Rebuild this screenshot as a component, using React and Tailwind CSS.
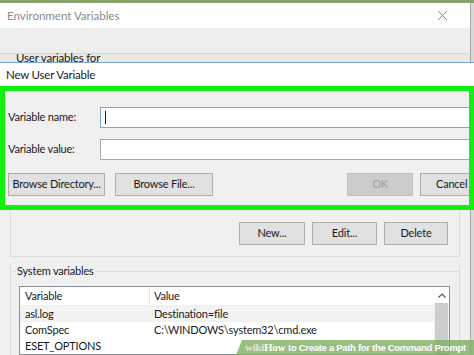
import React from "react";

function WinButton({ children, className = "", disabled = false }) {
  return (
    <div
      className={
        "flex h-[23px] items-center justify-center whitespace-nowrap border text-[11px] tracking-[-0.2px] " +
        (disabled
          ? "border-[#bfbfbf] bg-[#cccccc] text-[#a0a0a0] "
          : "border-[#adadad] bg-[#e1e1e1] text-[#1a1a1a] ") +
        className
      }
    >
      {children}
    </div>
  );
}

function SideStrip() {
  return <div className="w-[4px] shrink-0 border-l border-[#a8a8a8] bg-[#d9d9d9]" />;
}

export default function App() {
  const rows = [
    ["asl.log", "Destination=file", true],
    ["ComSpec", "C:\\WINDOWS\\system32\\cmd.exe", false],
    ["ESET_OPTIONS", "", false],
  ];

  return (
    <div
      className="relative flex h-[355px] w-[474px] flex-col overflow-hidden bg-[#f0f0f0] text-[#1a1a1a]"
      style={{ fontFamily: "Lato, 'Noto Sans', sans-serif" }}
    >
      {/* desktop strip behind the window */}
      <div className="h-[3px] shrink-0 bg-[#8aa36c]" />

      {/* Environment Variables window, top part */}
      <div className="flex shrink-0">
        <div className="flex w-[470px] flex-col">
          <div className="flex h-[25px] items-center justify-between bg-white pl-[7px] pr-[22px]">
            <span className="text-[11.5px] text-[#8a8a8a]">Environment Variables</span>
            <svg width="11" height="11" viewBox="0 0 11 11" className="text-[#8a8a8a]">
              <path d="M1 1L10 10M10 1L1 10" stroke="currentColor" strokeWidth="1" />
            </svg>
          </div>
          <div className="relative h-[34px] bg-[#eeeeee]">
            <div className="absolute left-0 right-0 top-[25px] h-[9px] border-t border-[#c9dcea] bg-[#ebe8e2]" />
            <span className="absolute left-[16px] top-[21px] text-[11.5px] tracking-[-0.2px] text-[#1a1a1a]">
              User variables for
            </span>
          </div>
        </div>
        <SideStrip />
      </div>

      {/* New User Variable dialog */}
      <div className="flex shrink-0 flex-col border-t border-[#7ea7cf]">
        <div className="flex h-[23px] items-center bg-white pl-[6px] text-[11.5px] tracking-[-0.2px] text-[#1a1a1a]">
          New User Variable
        </div>
        <div className="h-[124px] overflow-hidden border-[5px] border-[#12f012] bg-[#f0f0f0]">
          <div className="flex flex-col pl-[3px] pt-[16px] text-[11px] tracking-[-0.2px]">
            <div className="flex h-[21px] items-center">
              <span className="w-[92px] shrink-0 whitespace-nowrap">Variable name:</span>
              <div className="flex h-[21px] w-[420px] shrink-0 items-center border border-[#7aa7d4] bg-white pl-[4px]">
                <div className="h-[13px] w-px bg-[#1a1a1a]" />
              </div>
            </div>
            <div className="mt-[11px] flex h-[21px] items-center">
              <span className="w-[92px] shrink-0 whitespace-nowrap">Variable value:</span>
              <div className="h-[21px] w-[420px] shrink-0 border border-[#a9a9a9] bg-white" />
            </div>
            <div className="mt-[13px] flex items-center">
              <WinButton className="w-[97px] shrink-0">Browse Directory...</WinButton>
              <WinButton className="ml-[10px] w-[98px] shrink-0">Browse File...</WinButton>
              <WinButton disabled className="ml-[134px] w-[66px] shrink-0">OK</WinButton>
              <WinButton className="ml-[7px] w-[72px] shrink-0 !justify-start pl-[15px]">Cancel</WinButton>
            </div>
          </div>
        </div>
      </div>

      {/* Environment Variables window, lower part */}
      <div className="flex min-h-0 flex-1">
        <div className="flex w-[470px] flex-col">
          <div className="mx-[10px] flex h-[48px] justify-end border-x border-b border-[#dcdcdc] pr-[11px] pt-[12px]">
            <div className="flex gap-[7px]">
              <WinButton className="w-[66px]">New...</WinButton>
              <WinButton className="w-[65px]">Edit...</WinButton>
              <WinButton className="w-[64px]">Delete</WinButton>
            </div>
          </div>

          <div className="mx-[10px] mt-[7px] flex flex-1 flex-col border-x border-[#dcdcdc] text-[11px] tracking-[-0.2px]">
            <div className="relative flex h-[14px] items-center">
              <div className="absolute left-0 right-0 top-[7px] h-px bg-[#dcdcdc]" />
              <span className="relative ml-[5px] bg-[#f0f0f0] px-px">System variables</span>
            </div>
            <div className="ml-[8px] mr-[9px] mt-[8px] flex flex-1 border border-[#8b8f96] bg-white">
              <div className="flex flex-1 flex-col">
                <div className="flex h-[19px] items-center border-b border-[#f0f0f0]">
                  <div className="w-[130px] border-r border-[#e5e5e5] pl-[5px]">Variable</div>
                  <div className="pl-[4px]">Value</div>
                </div>
                {rows.map(([name, value, selected]) => (
                  <div
                    key={name}
                    className={"flex h-[16px] items-center " + (selected ? "bg-[#f2f2f2]" : "bg-white")}
                  >
                    <div className="w-[130px] pl-[5px]">{name}</div>
                    <div className="pl-[4px]">{value}</div>
                  </div>
                ))}
              </div>
              <div className="flex w-[15px] flex-col bg-[#f0f0f0]">
                <div className="flex h-[16px] items-center justify-center bg-white">
                  <svg width="8" height="5" viewBox="0 0 8 5">
                    <path d="M0.5 4.5L4 1L7.5 4.5" stroke="#555" strokeWidth="1.2" fill="none" />
                  </svg>
                </div>
                <div className="mx-px flex-1 bg-[#cdcdcd]" />
              </div>
            </div>
          </div>
        </div>
        <SideStrip />
      </div>

      {/* watermark banner */}
      <div className="absolute bottom-0 right-0 flex h-[15px] w-[238px] items-center bg-[#7fae62]/80 pl-[9px] [clip-path:polygon(6px_0,100%_0,100%_100%,0_100%)]">
        <span
          className="whitespace-nowrap text-[9.5px] font-bold tracking-[-0.3px] text-white"
          style={{ fontFamily: "'Liberation Sans', Arial, sans-serif" }}
        >
          <span className="text-[11px] text-[#dfe8d2]" style={{ fontFamily: "'Liberation Serif', serif" }}>wiki</span>
          <span className="mr-[3px] text-[11px]" style={{ fontFamily: "'Liberation Serif', serif" }}>How</span>to Create a Path for the Command Prompt
        </span>
      </div>
    </div>
  );
}
